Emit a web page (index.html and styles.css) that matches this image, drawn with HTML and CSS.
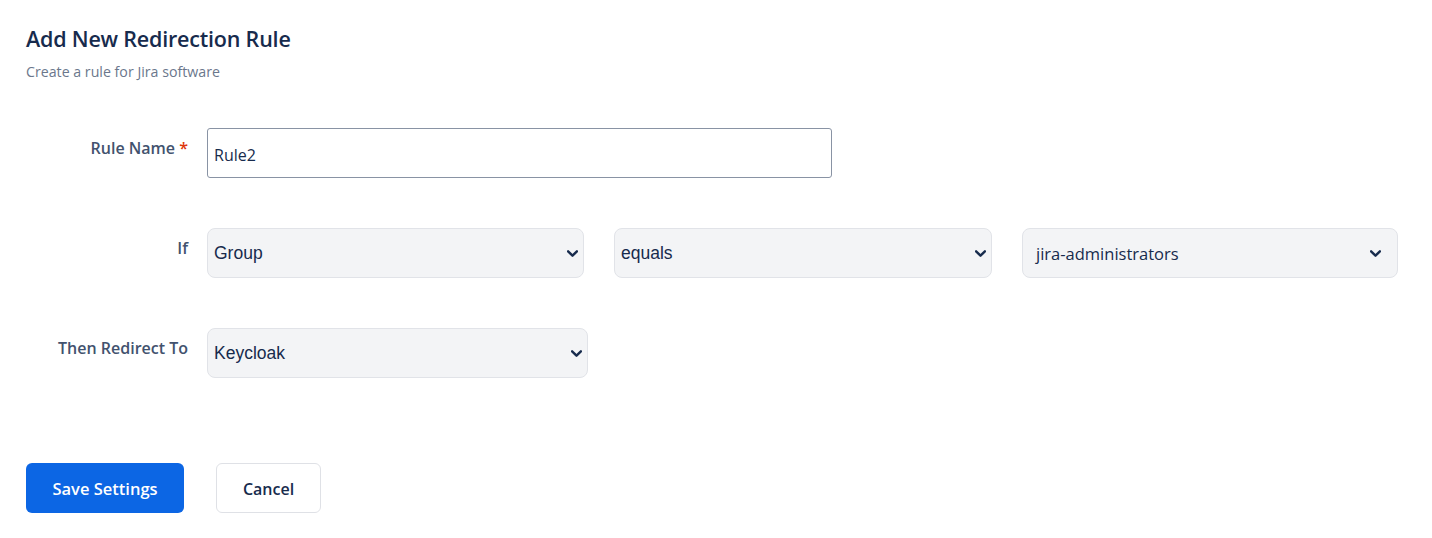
FILE: index.html
```html
<!DOCTYPE html>
<html lang="en">
<head>
<meta charset="utf-8">
<title>Add New Redirection Rule</title>
<link rel="stylesheet" href="styles.css">
</head>
<body>
<div class="page">
  <header class="head">
    <h1 class="title">Add New Redirection Rule</h1>
    <p class="subtitle">Create a rule for Jira software</p>
  </header>
  <form class="form">
    <div class="row">
      <label class="label">Rule Name <span class="req">*</span></label>
      <div class="field"><div class="input">Rule2</div></div>
    </div>
    <div class="row">
      <label class="label">If</label>
      <div class="field cond">
        <div class="select w376"><span class="val">Group</span><svg class="chev" viewBox="0 0 10 6"><path d="M1 1l4 4 4-4"/></svg></div>
        <div class="select w377"><span class="val">equals</span><svg class="chev" viewBox="0 0 10 6"><path d="M1 1l4 4 4-4"/></svg></div>
        <div class="select w375 alt"><span class="val">jira-administrators</span><svg class="chev" viewBox="0 0 10 6"><path d="M1 1l4 4 4-4"/></svg></div>
      </div>
    </div>
    <div class="row">
      <label class="label">Then Redirect To</label>
      <div class="field">
        <div class="select w380"><span class="val">Keycloak</span><svg class="chev" viewBox="0 0 10 6"><path d="M1 1l4 4 4-4"/></svg></div>
      </div>
    </div>
  </form>
  <div class="actions">
    <button class="btn primary" type="button">Save Settings</button>
    <button class="btn secondary" type="button">Cancel</button>
  </div>
</div>
</body>
</html>
```
FILE: styles.css
```css
* { box-sizing: border-box; }
html, body { margin: 0; background: #fff; }
body { font-family: "Open Sans", "Noto Sans", sans-serif; color: #172b4d; }
.page { padding: 25px 26px 0 26px; }
.head { margin-bottom: 47px; }
.title { margin: 0; font-size: 21.5px; line-height: 28px; font-weight: 600; color: #172b4d; letter-spacing: -0.2px; }
.subtitle { margin: 10px 0 0 0; font-size: 14.2px; line-height: 18px; color: #6b778c; }
.form { display: flex; flex-direction: column; gap: 50px; }
.row { display: flex; align-items: flex-start; gap: 19px; }
.label { width: 162px; text-align: right; font-size: 16px; font-weight: 600; color: #42526e; padding-top: 9px; line-height: 22px; }
.req { color: #de350b; }
.field { display: flex; }
.cond { gap: 30px; }
.input { width: 625px; height: 50px; border: 1px solid #8993a4; border-radius: 3px; padding: 0 6px; display: flex; align-items: center; padding-top: 4px; font-size: 16px; color: #172b4d; }
.select { height: 50px; background: #f3f4f6; border: 1px solid #e1e3e8; border-radius: 8px; display: flex; align-items: center; justify-content: space-between; padding: 0 5px 0 6px; font-family: "Liberation Sans", Arial, sans-serif; font-size: 17.5px; color: #172b4d; }
.select.alt { font-family: "Open Sans", "Noto Sans", sans-serif; font-size: 16.5px; padding-left: 13px; padding-right: 16px; }
.w376 { width: 377px; }
.w377 { width: 378px; }
.w375 { width: 376px; }
.w380 { width: 381px; }
.chev { width: 11px; height: 7px; fill: none; stroke: #172b4d; stroke-width: 2.2; stroke-linecap: round; stroke-linejoin: round; }
.actions { display: flex; gap: 32px; margin-top: 85px; }
.btn { height: 50px; border-radius: 6px; font-family: "Open Sans", "Noto Sans", sans-serif; font-size: 16.5px; font-weight: 600; cursor: pointer; padding-top: 2px; }
.primary { width: 158px; background: #0c66e4; color: #fff; border: none; }
.secondary { width: 105px; background: #fff; color: #172b4d; border: 1px solid #dfe1e6; font-size: 16px; }
```
